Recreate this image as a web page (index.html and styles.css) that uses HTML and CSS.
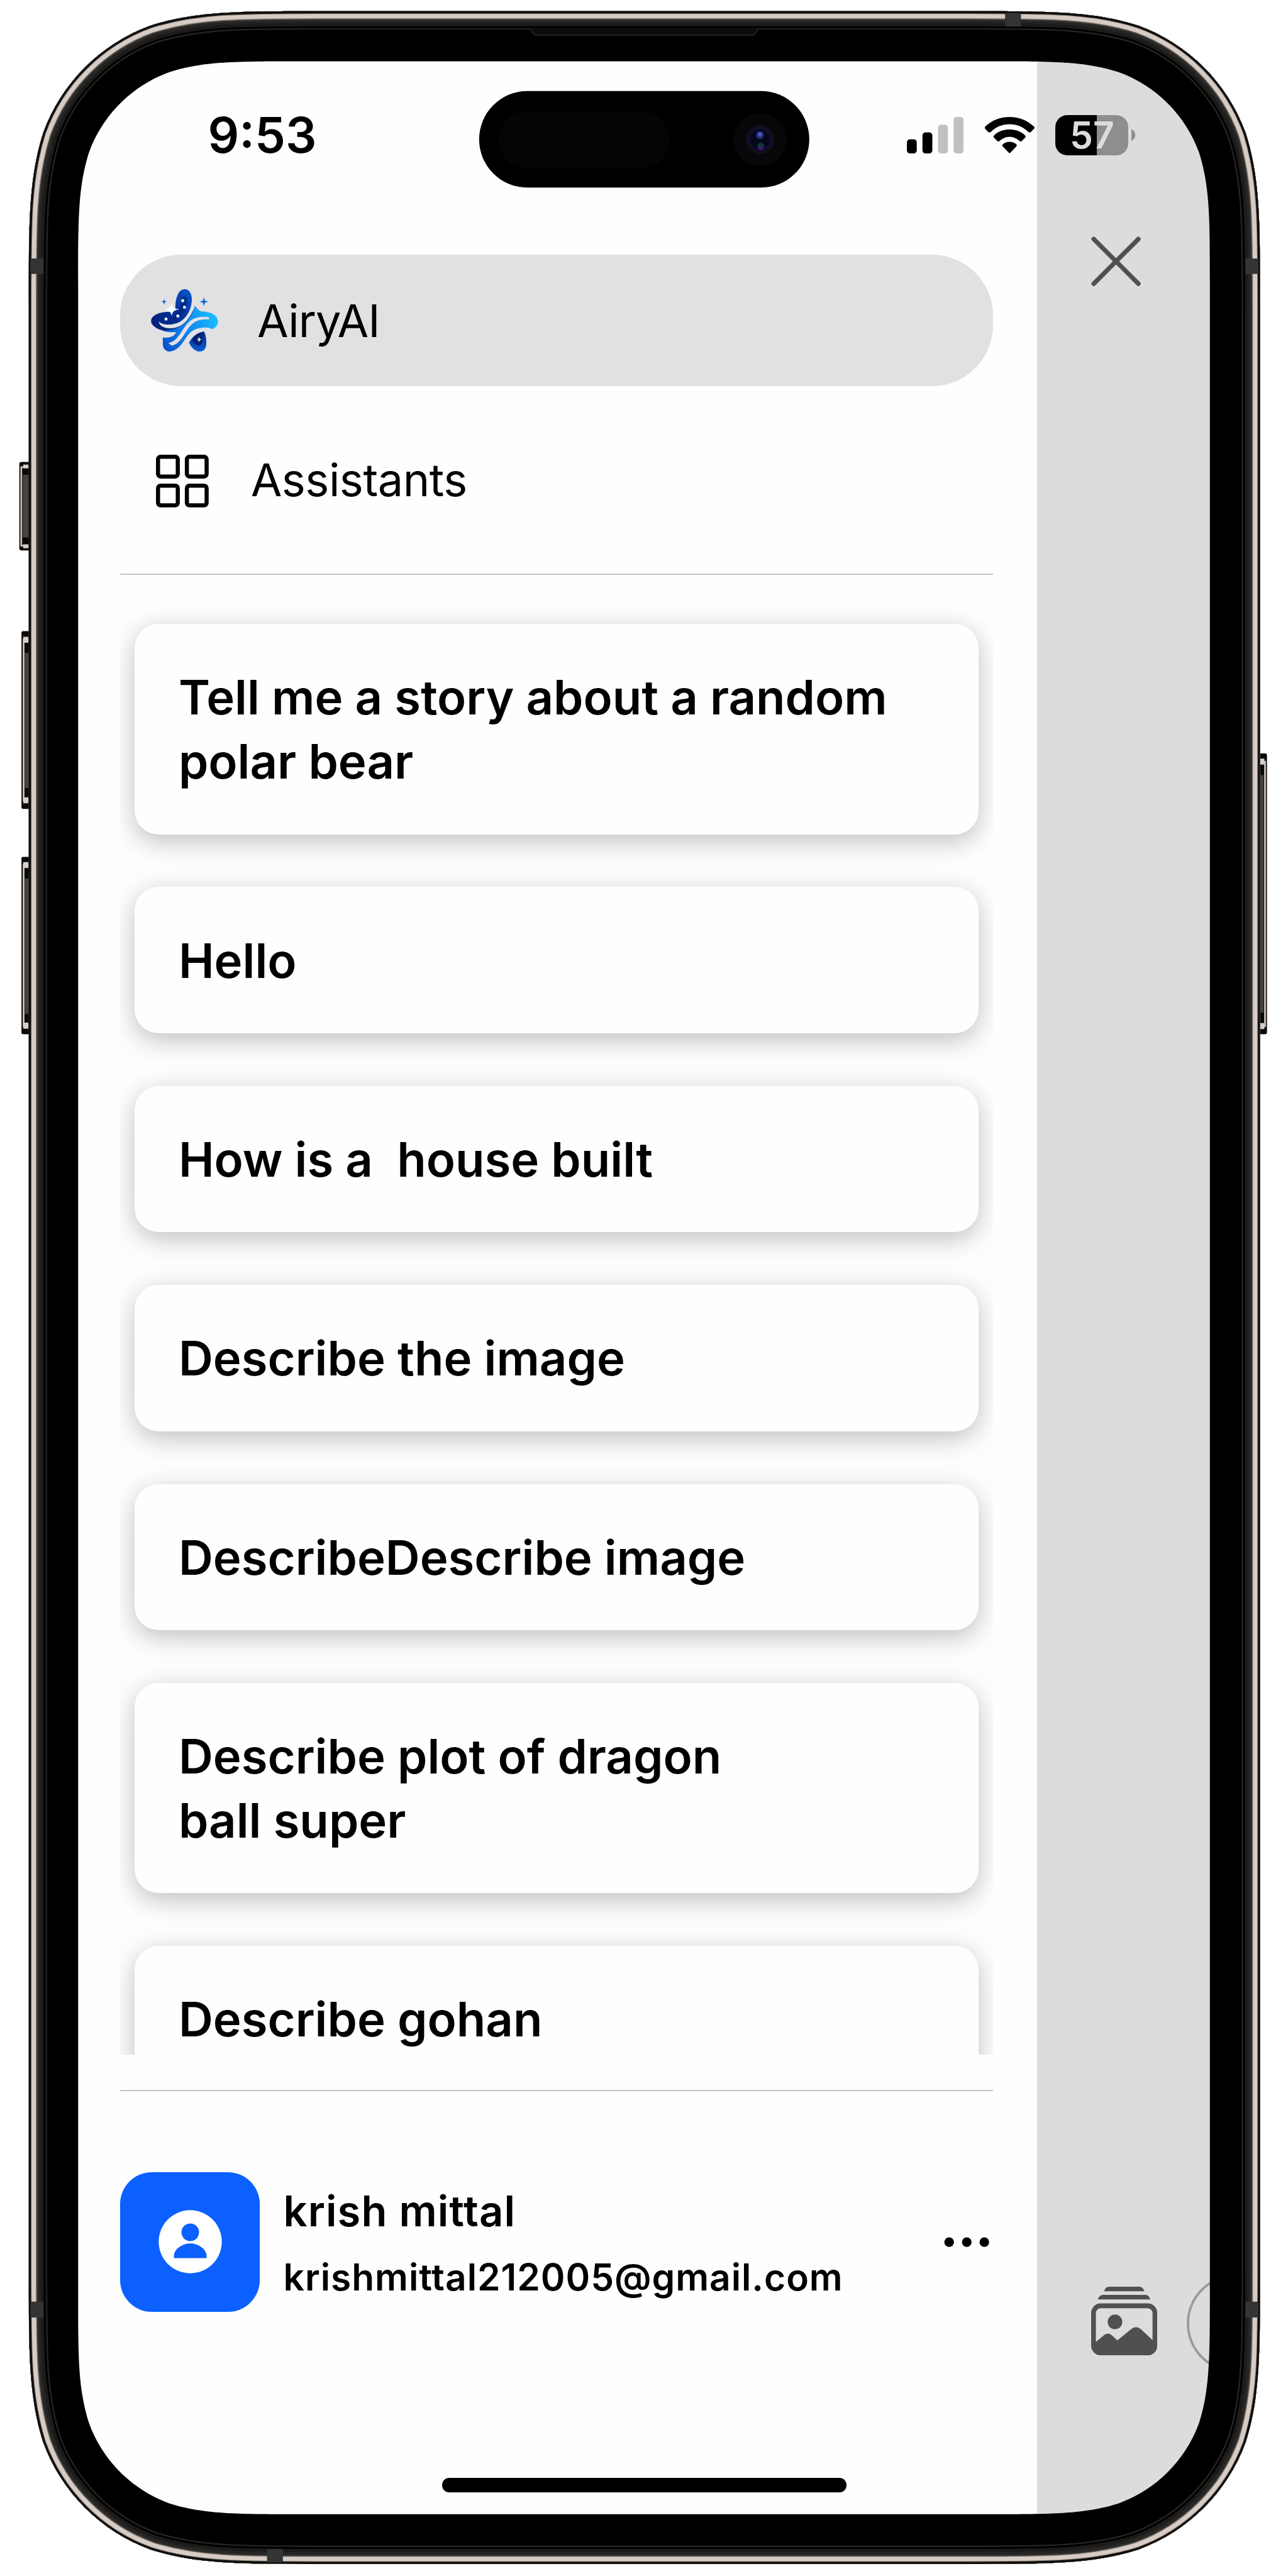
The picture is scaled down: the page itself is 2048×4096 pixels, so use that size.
FILE: index.html
```html
<!DOCTYPE html>
<html lang="en">
<head>
<meta charset="utf-8">
<title>AiryAI</title>
<link rel="stylesheet" href="styles.css">
</head>
<body>
<div class="device">
  <div class="screen">
    <aside class="drawer">
      <nav class="nav">
        <a class="nav-item nav-item-active">
          <svg class="logo" viewBox="95 117 472 443">
            <defs>
              <linearGradient id="deep" x1="0" y1="1" x2="1" y2="0"><stop offset="0" stop-color="#011c6c"/><stop offset=".5" stop-color="#04319a"/><stop offset="1" stop-color="#0b62d6"/></linearGradient>
              <linearGradient id="wave" gradientUnits="userSpaceOnUse" x1="180" y1="520" x2="565" y2="330"><stop offset="0" stop-color="#0a52cc"/><stop offset=".45" stop-color="#1180ec"/><stop offset="1" stop-color="#1cc0ff"/></linearGradient>
              <linearGradient id="foot" x1="0" y1="0" x2="0" y2="1"><stop offset="0" stop-color="#04257e"/><stop offset="1" stop-color="#0b5fd4"/></linearGradient>
            </defs>
            <path fill="url(#deep)" d="M266 262C264 190 284 120 330 120C372 120 384 165 380 212C374 270 330 368 222 368C190 368 160 362 152 347C152 378 190 394 232 394C320 390 368 325 403 237C412 250 424 265 436 272L300 420C240 424 196 418 160 404C115 386 95 364 96 340C100 300 160 276 228 280Z"/>
            <path fill="url(#wave)" d="M403 237C412 256 428 272 452 276C512 278 562 300 564 345C564 370 548 390 522 400C510 388 480 386 450 390C370 396 350 450 314 498C286 534 256 556 222 556C190 552 178 530 178 500V458C214 464 254 456 270 424C240 424 200 420 170 408C250 420 370 370 403 237Z"/>
            <path fill="#e1e1e4" d="M152 347C152 378 190 394 232 394C320 390 368 325 403 237L380 212C374 290 320 368 222 368C190 368 160 362 152 347Z"/>
            <path fill="#e1e1e4" d="M499 316C400 304 360 340 322 398C290 446 268 488 218 496L240 516C300 500 320 444 352 400C392 342 436 328 502 332Z"/>
            <path fill="#e1e1e4" d="M178 455C220 456 250 440 272 420C240 424 214 422 196 417C214 430 222 428 238 426C220 440 200 452 178 455Z"/>
            <path fill="url(#foot)" d="M466 416C404 426 376 466 361 496C380 530 402 556 434 556C468 556 482 532 482 500C483 466 478 440 466 416Z"/>
            <path fill="#02195e" opacity=".75" d="M446 428C410 436 388 458 384 478C398 500 412 516 434 517C456 502 462 470 446 428Z"/>
            <path fill="#011c6c" opacity=".6" d="M302 200C304 180 318 168 334 172C352 180 352 220 340 254C320 300 290 318 240 334C280 290 304 260 302 200Z"/>
            <g fill="#e9f0fb"><rect x="307" y="190" width="20" height="21" rx="5"/><rect x="320" y="237" width="19" height="20" rx="5"/><rect x="273" y="298" width="20" height="20" rx="5"/><rect x="191" y="319" width="19" height="20" rx="5"/><path d="M432 452l5 15 13 5-13 5-5 15-5-15-13-5 13-5z"/></g>
            <path fill="#f3fcff" d="M240 214C246 246 254 258 294 261C256 268 246 276 240 308C232 276 224 266 186 261C222 256 234 246 240 214Z"/>
            <path fill="#0f62cf" d="M187 188l5 16 15 4-15 4-5 17-5-17-14-4 14-4z"/>
            <path fill="#1169d4" d="M465 176l8 25 23 6-23 8-8 23-8-23-23-8 23-6z"/>
          </svg>
          <span>AiryAI</span>
        </a>
        <a class="nav-item nav-item-plain">
          <svg class="grid-icon" viewBox="0 0 123 123" fill="none" stroke="#000" stroke-width="9.5"><rect x="4.8" y="4.8" width="46" height="46" rx="6"/><rect x="72" y="4.8" width="46" height="46" rx="6"/><rect x="4.8" y="72" width="46" height="46" rx="6"/><rect x="72" y="72" width="46" height="46" rx="6"/></svg>
          <span>Assistants</span>
        </a>
      </nav>
      <hr class="rule">
      <div class="chats">
        <article class="chat">Tell me a story about a random<br>polar bear</article>
        <article class="chat">Hello</article>
        <article class="chat">How is a&nbsp; house built</article>
        <article class="chat">Describe the image</article>
        <article class="chat">DescribeDescribe image</article>
        <article class="chat">Describe plot of dragon<br>ball super</article>
        <article class="chat">Describe gohan</article>
      </div>
      <hr class="rule rule-bottom">
      <footer class="account">
        <div class="avatar">
          <svg viewBox="0 0 148 148"><circle cx="74" cy="74" r="73.5" fill="#fff"/><circle cx="74" cy="52" r="20.5" fill="#0b60ff"/><path fill="#0b60ff" d="M36 112V105C38 90 56 78 74 78S110 90 112 105V112Z"/></svg>
        </div>
        <div class="identity">
          <div class="name">krish mittal</div>
          <div class="email">krishmittal212005@gmail.com</div>
        </div>
        <svg class="more" viewBox="0 0 106 24"><circle cx="12" cy="12" r="11.2"/><circle cx="53" cy="12" r="11.2"/><circle cx="94" cy="12" r="11.2"/></svg>
      </footer>
    </aside>
    <section class="backdrop">
      <svg class="close" viewBox="0 0 116 116"><path d="M6 6L110 110M110 6L6 110" fill="none" stroke="#505050" stroke-width="10.5" stroke-linecap="round"/></svg>
      <div class="composer">
        <svg class="photos" viewBox="0 0 154 160">
          <path fill="#505050" d="M30 10.500Q34 0 41 0H112Q120 0 124 10.500ZM15 29.500Q20 19 27 19H127Q134 19 138 29.500Z"/>
          <rect x="5.500" y="44.500" width="143" height="110" rx="17" fill="none" stroke="#505050" stroke-width="11"/>
          <circle cx="55.500" cy="82" r="17" fill="#505050"/>
          <path fill="#505050" d="M8 131L31 112Q39 106 47 112L61 125L94 98Q104 90 115 98L146 127V142Q144 156 128 156H24Q8 154 8 140Z"/>
        </svg>
        <div class="field"></div>
      </div>
    </section>
    <div class="status">
      <span class="time">9:53</span>
      <div class="status-icons">
        <svg class="signal" viewBox="0 0 132 85"><rect y="52" width="23" height="33" rx="7"/><rect x="36.300" y="36" width="23" height="49" rx="7"/><g fill="#c0c0c0"><rect x="72.600" y="18" width="23" height="67" rx="7"/><rect x="109" width="23" height="85" rx="7"/></g></svg>
        <svg class="wifi" viewBox="0 0 116 85"><path d="M57.500 0C80 0 99 8 114 22Q117 25 114.500 27.500L107 35Q104 37 101.500 35C89 23 74 17 57.500 17S26 23 13.500 35Q11 37 8 35L.5 27.500Q-2 25 1 22C16 8 35 0 57.500 0ZM57.500 29C72 29 85 34 94 43.500Q96 46 94 48L86 56Q83.500 58 81 56C74 50 66 46 57.500 46S41 50 34 56Q31.500 58 29 56L21 48Q19 46 21 43.500C30 34 43 29 57.500 29ZM57.500 58C64 58 69 60 73.500 64Q75.500 66 73.500 68.500L59.500 83Q57.500 85 55.500 83L41.500 68.500Q39.500 66 41.500 64C46 60 51 58 57.500 58Z"/></svg>
        <div class="battery"><div class="cell">57</div><svg class="nub" viewBox="0 0 9 28"><path fill="#8e8e8e" d="M0 0Q9 5 9 14T0 28Z"/></svg></div>
      </div>
    </div>
    <div class="home"></div>
  </div>
  <svg class="bezel" viewBox="0 0 3000 6000">
    <defs>
      <path id="shell" d="M753.400 26h1495.200c197.700 0 296.500 0 402.900 33.600c116.100 42.300 207.600 133.800 249.900 249.900c33.600 106.400 33.600 205.200 33.600 402.900v4573.200c0 197.700 0 296.500-33.600 402.900c-42.300 116.100-133.800 207.600-249.900 249.900c-106.400 33.600-205.200 33.600-402.900 33.600h-1495.200c-197.700 0-296.500 0-402.900-33.600c-116.100-42.300-207.600-133.800-249.900-249.900c-33.600-106.400-33.600-205.200-33.600-402.900v-4573.200c0-197.700 0-296.500 33.600-402.900c42.300-116.100 133.800-207.600 249.900-249.900c106.400-33.600 205.200-33.600 402.900-33.600z"/>
      <clipPath id="inside"><use href="#shell"/></clipPath>
    </defs>
    <g class="keys">
      <path fill="#0a0908" d="M68 1076H50Q45 1076 45 1081V1277Q45 1282 50 1282H68ZM68 1470H54Q50 1470 50 1474V1880Q50 1884 54 1884H68ZM68 1996H54Q50 1996 50 1999V2405Q50 2409 54 2409H68ZM2934 1755H2947Q2951 1755 2951 1759V2405Q2951 2409 2947 2409H2934Z"/>
      <path fill="none" stroke="#cfc4ba" stroke-width="4" d="M67 1088H49.500V1271H67M67 1490H55V1864H67M67 2015H55V2389H67M2935 1774H2946.500V2390H2935"/>
      <path fill="#d8cec5" d="M54 1082h12v9H54zM54 1268h12v9H54zM54 1483h12v14H54zM54 1857h12v14H54zM54 2008h12v14H54zM54 2382h12v14H54zM2935 1767h10v14h-10zM2935 2383h10v14h-10z"/>
      <path fill="#474341" d="M53 1106h14v146H53zM58 1520h9v316h-9zM58 2046h9v316h-9zM2936 1805h7v554h-7z"/>
      <path fill="#0a0908" d="M53 1094h14v12H53zM53 1252h14v12H53zM58 1500h9v20h-9zM58 1836h9v18h-9zM58 2025h9v21h-9zM58 2362h9v17h-9zM2935 1784h8v21h-8zM2935 2359h8v20h-8z"/>
    </g>
    <path fill="#000" fill-rule="evenodd" d="M753.400 26h1495.200c197.700 0 296.500 0 402.900 33.600c116.100 42.300 207.600 133.800 249.900 249.900c33.600 106.400 33.600 205.200 33.600 402.900v4573.200c0 197.700 0 296.500-33.600 402.900c-42.300 116.100-133.800 207.600-249.900 249.900c-106.400 33.600-205.200 33.600-402.900 33.600h-1495.200c-197.700 0-296.500 0-402.900-33.600c-116.100-42.300-207.600-133.800-249.900-249.900c-33.600-106.400-33.600-205.200-33.600-402.900v-4573.200c0-197.700 0-296.500 33.600-402.900c42.300-116.100 133.800-207.600 249.900-249.900c106.400-33.600 205.200-33.600 402.900-33.600zM695.600 143h1608.800c147.900 0 221.800 0 301.400 25.200c86.900 31.600 155.400 100.100 187 187c25.200 79.600 25.200 153.500 25.200 301.400v4685.800c0 147.900 0 221.800-25.200 301.400c-31.600 86.900-100.100 155.400-187 187c-79.600 25.200-153.500 25.200-301.400 25.200h-1608.800c-147.900 0-221.800 0-301.400-25.200c-86.900-31.600-155.400-100.100-187-187c-25.200-79.600-25.200-153.500-25.200-301.400v-4685.800c0-147.900 0-221.800 25.200-301.400c31.600-86.900 100.100-155.400 187-187c79.600-25.200 153.500-25.200 301.400-25.200z"/>
    <g clip-path="url(#inside)" fill="none">
      <use href="#shell" stroke="#242424" stroke-width="86"/>
      <use href="#shell" stroke="#000" stroke-width="79"/>
      <use href="#shell" stroke="#1c1b19" stroke-width="70"/>
      <use href="#shell" stroke="#252422" stroke-width="56"/>
      <use href="#shell" stroke="#30302d" stroke-width="44"/>
      <use href="#shell" stroke="#7d756c" stroke-width="37"/>
      <use href="#shell" stroke="#d6ccc5" stroke-width="33"/>
      <use href="#shell" stroke="#7a7066" stroke-width="13"/>
      <use href="#shell" stroke="#0e0e0d" stroke-width="10"/>
    </g>
    <g fill="#343434">
      <path d="M71 602h30v36H71zM2901 602h30v36h-30zM71 5361h30v37H71zM2901 5361h30v37h-30zM2341 30h37v32h-37zM622 5937h37v31h-37z"/>
    </g>
    <path fill="#0c0c0c" d="M1237 64Q1240 83 1251 83H1750Q1761 83 1764 64Z"/>
    <path fill="none" stroke="#222" stroke-width="3" d="M1237 68Q1241 82 1251 82H1750Q1760 82 1764 68"/>
    <g class="island">
      <rect x="1116" y="212" width="769" height="225" rx="112.500" fill="#000"/>
      <rect x="1162" y="259" width="397" height="133" rx="66" fill="#050505"/>
      <circle cx="1770.500" cy="325" r="62" fill="#070608"/>
      <circle cx="1770.500" cy="325" r="33" fill="#10101c"/>
      <circle cx="1770.500" cy="325" r="24" fill="#07071a" stroke="#0d0d46" stroke-width="2"/>
      <circle cx="1770" cy="315" r="9" fill="#262a78"/><circle cx="1770" cy="313" r="5" fill="#4c54bc"/>
      <circle cx="1772" cy="340" r="8" fill="#0d3440"/><path d="M1765 342a7 7 0 0 0 14 0q-7 6-14 0z" fill="#5a10a0"/>
    </g>
  </svg>
</div>
</body>
</html>
```
FILE: styles.css
```css
/* The canvas is 30rem x 60rem and scales with the window width */
html { font-size: calc(100vw / 30); background: #fff; }
body { margin: 0; font-family: Inter, "Liberation Sans", sans-serif; color: #000; }
* { box-sizing: border-box; }
svg { display: block; flex: none; }

.device { position: relative; width: 30rem; height: 60rem; padding: 1.43rem 1.82rem 1.44rem; overflow: hidden; }
.screen { position: relative; display: flex; width: 26.36rem; height: 57.13rem; border-radius: 2.6rem; background: #fefefe; overflow: hidden; }
.bezel { position: absolute; left: 0; top: 0; width: 30rem; height: 60rem; }

.drawer { display: flex; flex-direction: column; width: 22.33rem; padding: 4.51rem 1.02rem 0 .98rem; }
.nav { display: flex; flex-direction: column; height: 7.425rem; font-size: 1.055rem; line-height: 1.3rem; }
.nav-item { display: flex; align-items: center; }
.nav-item-active { height: 3.05rem; padding-left: .71rem; gap: .91rem; border-radius: 1.42rem; background: #e1e1e4; letter-spacing: -.014rem; }
.nav-item-active span { padding-top: .02rem; }
.nav-item-plain { margin-top: 1.58rem; height: 1.23rem; padding-left: .83rem; gap: .98rem; letter-spacing: -.007rem; }
.logo { width: 1.573rem; height: 1.477rem; }
.grid-icon { width: 1.23rem; height: 1.23rem; margin-top: .03rem; }
.rule { width: 100%; height: .03rem; margin: 0; border: 0; background: #c3c3c5; flex: none; }
.rule-bottom { margin-top: .815rem; }

.chats { display: flex; flex-direction: column; flex: none; gap: 1.225rem; height: 34.46rem; padding: 1.14rem .33rem 0; overflow: hidden; }
.chat { flex: none; padding: .97rem 1.03rem .95rem; border-radius: .56rem; background: #fefefe; box-shadow: 0 .15rem .6rem rgba(0, 0, 0, .25); font-size: 1.113rem; font-weight: 600; line-height: 1.49rem; white-space: nowrap; }

.account { display: flex; align-items: center; flex: none; margin-top: 1.895rem; height: 3.25rem; }
.avatar { display: flex; align-items: center; justify-content: center; width: 3.25rem; height: 3.25rem; border-radius: .74rem; background: #0b60ff; }
.avatar svg { width: 1.48rem; height: 1.48rem; }
.identity { flex: 1; margin-left: .55rem; padding-top: .1rem; font-weight: 600; line-height: 1.54rem; white-space: nowrap; }
.name { font-size: .98rem; letter-spacing: .016rem; }
.email { font-size: .86rem; letter-spacing: .014rem; }
.more { width: 1.06rem; height: .24rem; margin-right: .09rem; }

.backdrop { display: flex; flex-direction: column; justify-content: space-between; width: 4.03rem; padding: 4.08rem 0 3.31rem; background: #dcdcdc; overflow: hidden; }
.close { width: 1.16rem; height: 1.16rem; margin-left: 1.27rem; }
.composer { display: flex; align-items: center; margin-left: 1.27rem; width: 6rem; }
.photos { width: 1.54rem; height: 1.6rem; margin-top: -.13rem; }
.field { width: 4rem; height: 2.26rem; margin-left: .68rem; border: .06rem solid #9b9b9f; border-radius: 1.13rem; }

.status { position: absolute; left: 0; top: 1.25rem; width: 100%; height: .94rem; display: flex; justify-content: space-between; align-items: center; padding: 0 1.74rem 0 3.02rem; }
.time { font-size: 1.14rem; line-height: 1.2rem; font-weight: 600; padding-top: .04rem; }
.status-icons { display: flex; align-items: center; }
.signal { width: 1.32rem; height: .85rem; }
.wifi { width: 1.16rem; height: .85rem; margin-left: .49rem; }
.battery { display: flex; align-items: center; gap: .065rem; margin-left: .49rem; }
.cell { width: 1.7rem; height: .94rem; border-radius: .28rem; background: linear-gradient(90deg, #000 57%, #8e8e8e 57%); color: #dcdcdc; font-size: .86rem; line-height: .95rem; font-weight: 600; text-align: center; }
.nub { width: .09rem; height: .28rem; }
.home { position: absolute; left: 8.48rem; bottom: .51rem; width: 9.42rem; height: .33rem; border-radius: .165rem; background: #000; }
```
